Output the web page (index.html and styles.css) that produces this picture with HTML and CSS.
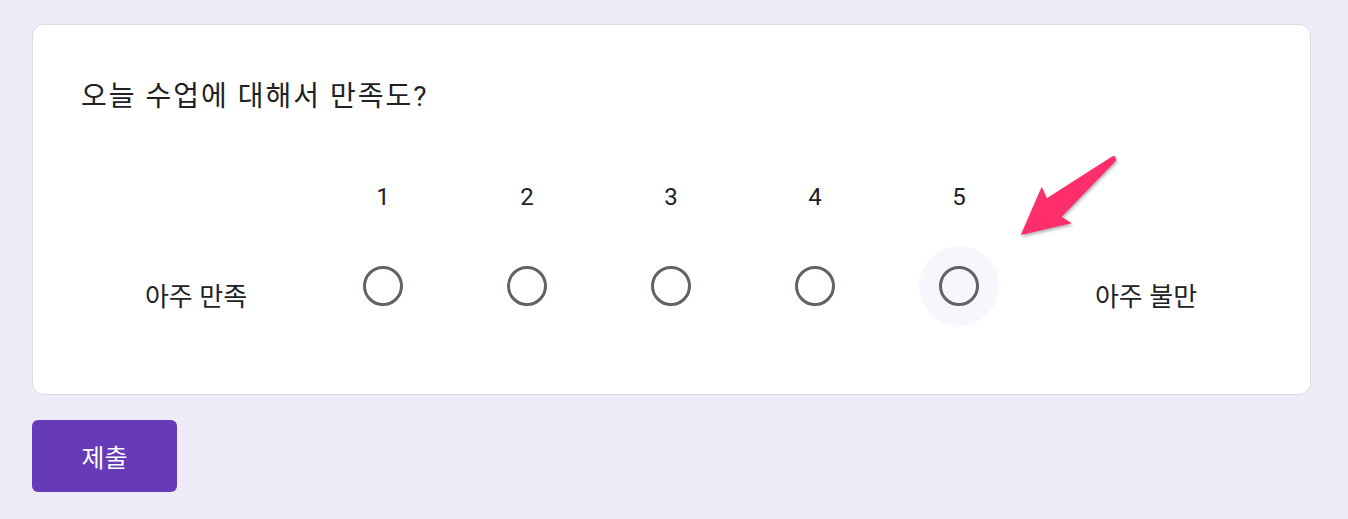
FILE: index.html
```html
<!DOCTYPE html>
<html lang="ko">
<head>
    <meta charset="UTF-8">
    <meta name="viewport" content="width=device-width, initial-scale=1.0">
    <title>만족도 조사</title>
    <link rel="stylesheet" href="styles.css">
</head>
<body>
    <div class="page">
        <div class="card">
            <div class="question">오늘 수업에 대해서 만족도?</div>

            <div class="scale">
                <div class="scale-label">아주 만족</div>

                <label class="scale-col">
                    <span class="num">1</span>
                    <span class="radio-wrap"><span class="radio"></span></span>
                </label>
                <label class="scale-col">
                    <span class="num">2</span>
                    <span class="radio-wrap"><span class="radio"></span></span>
                </label>
                <label class="scale-col">
                    <span class="num">3</span>
                    <span class="radio-wrap"><span class="radio"></span></span>
                </label>
                <label class="scale-col">
                    <span class="num">4</span>
                    <span class="radio-wrap"><span class="radio"></span></span>
                </label>
                <label class="scale-col">
                    <span class="num">5</span>
                    <span class="radio-wrap hover"><span class="radio"></span></span>
                </label>

                <div class="scale-label">아주 불만</div>
            </div>

            <svg class="arrow" width="115" height="95" viewBox="0 0 115 95">
                <path d="M10.7 85 L31.7 36.7 L36.7 48.3 L101.7 6.7 Q105 4.8 106 8.5 Q106.3 10.7 105 11.7 L51.7 66.7 L61.7 73.3 Z" fill="#fe2d6c"/>
            </svg>
        </div>

        <button class="submit" type="button">제출</button>
    </div>
</body>
</html>
```

FILE: styles.css
```css
* {
    margin: 0;
    padding: 0;
    box-sizing: border-box;
}

body {
    background-color: #efebf8;
    font-family: Roboto, "Noto Sans CJK KR", sans-serif;
    color: #202124;
}

.page {
    padding: 24px 37px 0 32px;
}

.card {
    position: relative;
    background-color: #fff;
    border: 1px solid #dadce0;
    border-radius: 12px;
    padding: 54px 48px 68px 48px;
}

.question {
    font-size: 28px;
    line-height: 36px;
    letter-spacing: 2px;
}

.scale {
    display: flex;
    margin-top: 64px;
}

.scale-label {
    width: 230px;
    align-self: flex-end;
    margin-bottom: 11px;
    text-align: center;
    font-size: 26px;
    line-height: 36px;
}

.scale-col {
    width: 144px;
    display: flex;
    flex-direction: column;
    align-items: center;
    cursor: pointer;
}

.num {
    font-size: 24px;
    line-height: 36px;
}

.radio-wrap {
    margin-top: 31px;
    width: 80px;
    height: 80px;
    border-radius: 50%;
    display: flex;
    justify-content: center;
    align-items: center;
}

.radio-wrap.hover {
    background-color: #f8f6fc;
}

.radio {
    width: 40px;
    height: 40px;
    border: 3.5px solid #5f6368;
    border-radius: 50%;
}

.arrow {
    position: absolute;
    left: 977px;
    top: 125px;
    filter: drop-shadow(1px 2px 1.5px rgba(0, 0, 0, 0.3));
}

.submit {
    margin-top: 25px;
    width: 145px;
    height: 72px;
    background-color: #673ab7;
    color: #fff;
    border: none;
    border-radius: 6px;
    font-family: Roboto, "Noto Sans CJK KR", sans-serif;
    font-size: 25px;
    cursor: pointer;
}
```
